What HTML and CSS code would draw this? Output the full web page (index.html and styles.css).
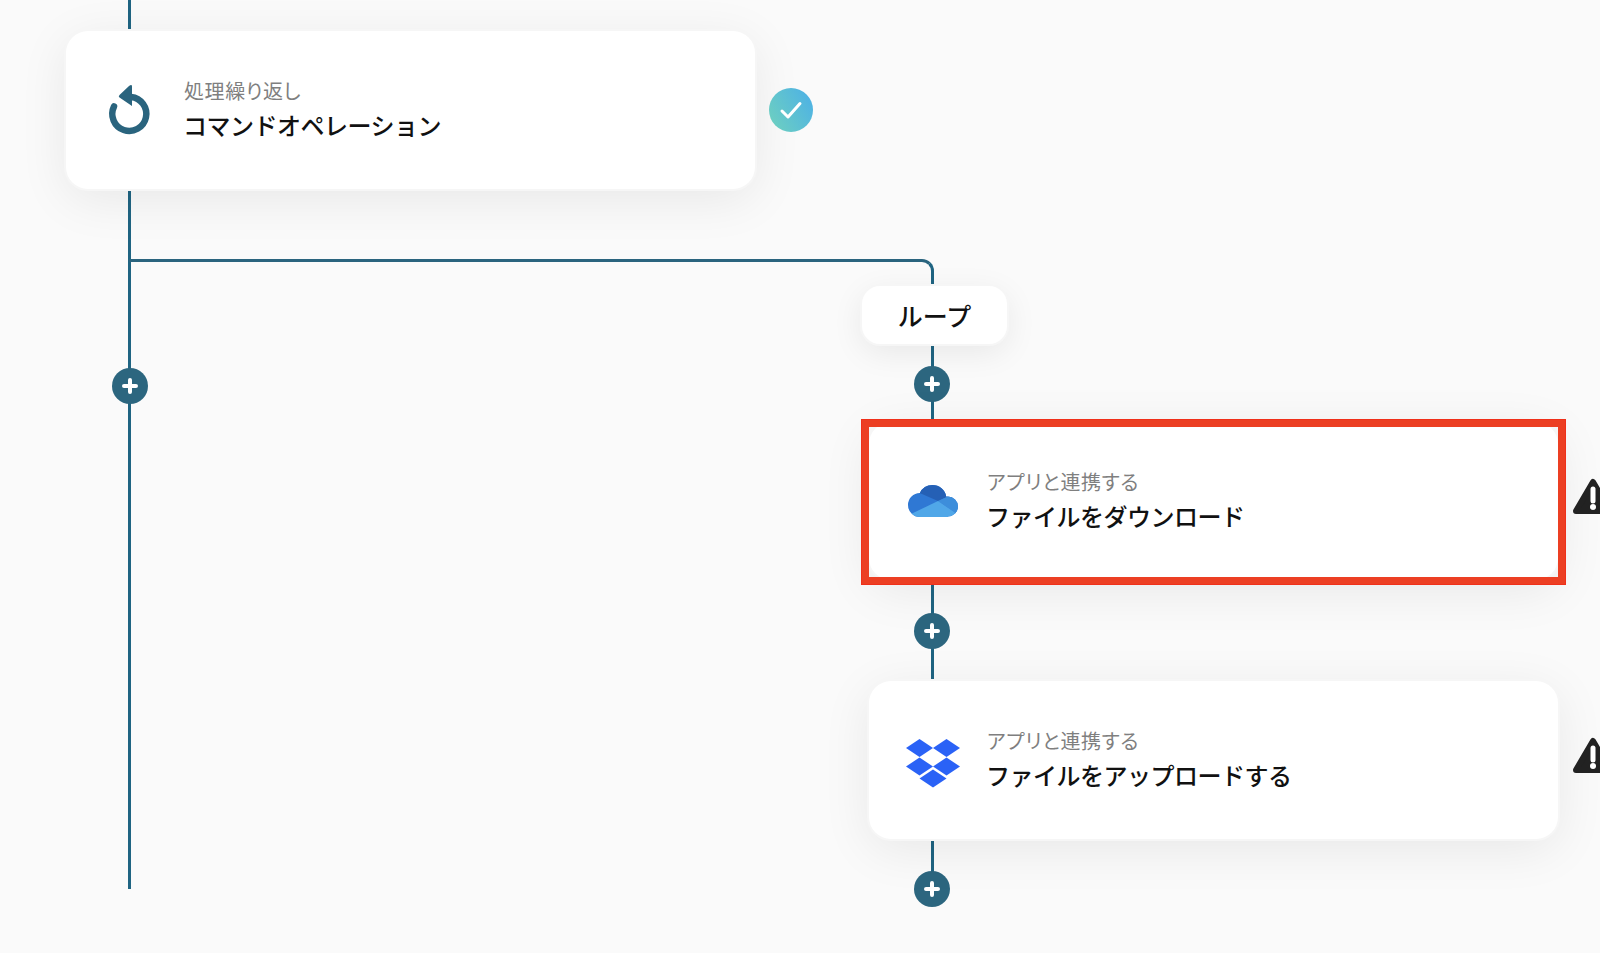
FILE: index.html
```html
<!DOCTYPE html>
<html lang="ja">
<head>
    <meta charset="UTF-8">
    <meta name="viewport" content="width=device-width, initial-scale=1.0">
    <title>フロー</title>
    <link rel="stylesheet" href="styles.css">
</head>
<body>

    <div class="canvas">
        <div class="line-main"></div>
        <div class="line-branch"></div>

        <div class="card card-loop">
            <div class="card-icon">
                <svg class="icon-loop" width="48" height="56" viewBox="0 0 48 56">
                    <path d="M7 24.5A17 17 0 1 0 24 15" fill="none" stroke="#2a647e" stroke-width="6.5" stroke-linecap="round"/>
                    <path d="M25 4.5L25 24L12.5 15.500Q11 14.500 12.500 13L22 4Q25 2 25 4.500Z" fill="#2a647e"/>
                </svg>
            </div>
            <div class="card-text">
                <span class="card-sub">処理繰り返し</span>
                <span class="card-title">コマンドオペレーション</span>
            </div>
        </div>

        <div class="status-ok">
            <svg width="24" height="20" viewBox="0 0 24 20">
                <path d="M3 11L9 17L21 3.500" fill="none" stroke="#fff" stroke-width="3" stroke-linecap="round" stroke-linejoin="round"/>
            </svg>
        </div>

        <div class="pill">ループ</div>

        <div class="plus plus-main"><svg width="16" height="16" viewBox="0 0 16 16"><path d="M8 2V14M2 8H14" stroke="#fff" stroke-width="4" stroke-linecap="round"/></svg></div>
        <div class="plus plus-a"><svg width="16" height="16" viewBox="0 0 16 16"><path d="M8 2V14M2 8H14" stroke="#fff" stroke-width="4" stroke-linecap="round"/></svg></div>
        <div class="plus plus-b"><svg width="16" height="16" viewBox="0 0 16 16"><path d="M8 2V14M2 8H14" stroke="#fff" stroke-width="4" stroke-linecap="round"/></svg></div>
        <div class="plus plus-c"><svg width="16" height="16" viewBox="0 0 16 16"><path d="M8 2V14M2 8H14" stroke="#fff" stroke-width="4" stroke-linecap="round"/></svg></div>

        <div class="card card-onedrive">
            <div class="card-icon">
                <svg class="icon-onedrive" width="50" height="32" viewBox="0 0 50 32">
                    <defs>
                        <clipPath id="cloud">
                            <circle cx="24.500" cy="14" r="14"/>
                            <circle cx="12" cy="20" r="12"/>
                            <circle cx="40" cy="21.500" r="10"/>
                            <rect x="12" y="18" width="28" height="14"/>
                        </clipPath>
                    </defs>
                    <g clip-path="url(#cloud)">
                        <rect width="50" height="32" fill="#2f78d4"/>
                        <polygon points="8,0 50,0 50,8 41,11 30,16 14,9 8,7" fill="#2560b5"/>
                        <polygon points="30,16 41,11 50,10 50,30 49,29" fill="#3d8edb"/>
                        <polygon points="30,16 49,29 50,32 0,32 3,29" fill="#50a7e8"/>
                    </g>
                </svg>
            </div>
            <div class="card-text">
                <span class="card-sub">アプリと連携する</span>
                <span class="card-title">ファイルをダウンロード</span>
            </div>
        </div>

        <div class="card card-dropbox">
            <div class="card-icon">
                <svg class="icon-dropbox" width="54" height="50" viewBox="0 0 54 50" fill="#2a62f6">
                    <polygon points="0,9 13.500,0 27,9 13.500,18"/>
                    <polygon points="27,9 40.500,0 54,9 40.500,18"/>
                    <polygon points="0,27.500 13.500,18.500 27,27.500 13.500,36.500"/>
                    <polygon points="27,27.500 40.500,18.500 54,27.500 40.500,36.500"/>
                    <polygon points="13.500,39.500 27,30.500 40.500,39.500 27,48.500"/>
                </svg>
            </div>
            <div class="card-text">
                <span class="card-sub">アプリと連携する</span>
                <span class="card-title">ファイルをアップロードする</span>
            </div>
        </div>

        <div class="highlight"></div>

        <svg class="warn warn-a" width="40" height="37" viewBox="0 0 40 37">
            <polygon points="20,4 37,33 3,33" fill="#222" stroke="#222" stroke-width="6" stroke-linejoin="round"/>
            <path d="M20 11V23" stroke="#fff" stroke-width="5" stroke-linecap="round"/>
            <circle cx="20" cy="29" r="3" fill="#fff"/>
        </svg>
        <svg class="warn warn-b" width="40" height="37" viewBox="0 0 40 37">
            <polygon points="20,4 37,33 3,33" fill="#222" stroke="#222" stroke-width="6" stroke-linejoin="round"/>
            <path d="M20 11V23" stroke="#fff" stroke-width="5" stroke-linecap="round"/>
            <circle cx="20" cy="29" r="3" fill="#fff"/>
        </svg>
    </div>

</body>
</html>
```

FILE: styles.css
```css
body {
    margin: 0;
    font-family: "Noto Sans CJK JP", "Noto Sans", sans-serif;
    background-color: #fafafa;
}

.canvas {
    position: relative;
    width: 1600px;
    height: 953px;
    overflow: hidden;
    background-color: #fafafa;
}

.line-main {
    position: absolute;
    left: 128px;
    top: 0;
    width: 3px;
    height: 889px;
    background-color: #1f6482;
}

.line-branch {
    position: absolute;
    left: 129px;
    top: 259px;
    width: 802px;
    height: 630px;
    border-top: 3px solid #2a647e;
    border-right: 3px solid #1f6482;
    border-top-right-radius: 12px;
}

.card {
    position: absolute;
    display: flex;
    align-items: center;
    gap: 25px;
    box-sizing: border-box;
    width: 689px;
    height: 158px;
    padding-left: 36px;
    background-color: #fff;
    border-radius: 22px;
    box-shadow: 0 0 0 2px #f6f6f6, 0 10px 50px rgba(0, 0, 0, 0.08);
}

.card-loop {
    left: 66px;
    top: 31px;
}

.card-onedrive {
    left: 869px;
    top: 422px;
}

.card-dropbox {
    left: 869px;
    top: 681px;
}

.card-icon {
    display: flex;
    justify-content: center;
    align-items: center;
    flex: none;
    width: 56px;
}

.icon-loop {
    margin-left: 1px;
}

.icon-onedrive {
    margin: -1px 1px 0 0;
}

.icon-dropbox {
    margin-top: 7px;
}

.card-text {
    display: flex;
    flex-direction: column;
    gap: 2px;
    margin-bottom: 3px;
}

.card-sub {
    margin-left: 1px;
    font-size: 20px;
    line-height: 30px;
    letter-spacing: 0.6px;
    font-feature-settings: "palt";
    color: #7f7f7f;
}

.card-title {
    font-size: 24px;
    line-height: 34px;
    letter-spacing: -0.5px;
    font-weight: 500;
    color: #111;
}

.status-ok {
    position: absolute;
    left: 769px;
    top: 88px;
    display: flex;
    justify-content: center;
    align-items: center;
    width: 44px;
    height: 44px;
    border-radius: 50%;
    background: linear-gradient(60deg, #70d2bd, #4bafe8);
}

.pill {
    position: absolute;
    left: 862px;
    top: 286px;
    width: 145px;
    height: 58px;
    line-height: 58px;
    text-align: center;
    font-size: 25px;
    font-weight: 500;
    color: #111;
    background-color: #fff;
    border-radius: 18px;
    box-shadow: 0 0 0 2px #f6f6f6, 0 8px 32px rgba(0, 0, 0, 0.08);
}

.plus {
    position: absolute;
    display: flex;
    justify-content: center;
    align-items: center;
    width: 36px;
    height: 36px;
    border-radius: 50%;
    background-color: #2c667f;
}

.plus-main {
    left: 112px;
    top: 368px;
}

.plus-a {
    left: 914px;
    top: 366px;
}

.plus-b {
    left: 914px;
    top: 613px;
}

.plus-c {
    left: 914px;
    top: 871px;
}

.highlight {
    position: absolute;
    left: 861px;
    top: 419px;
    box-sizing: border-box;
    width: 705px;
    height: 166px;
    border: 8px solid #ec3f23;
    outline: 1px solid #f0301a;
    outline-offset: -1px;
}

.warn {
    position: absolute;
    left: 1573px;
}

.warn-a {
    top: 478px;
}

.warn-b {
    top: 737px;
}
```
